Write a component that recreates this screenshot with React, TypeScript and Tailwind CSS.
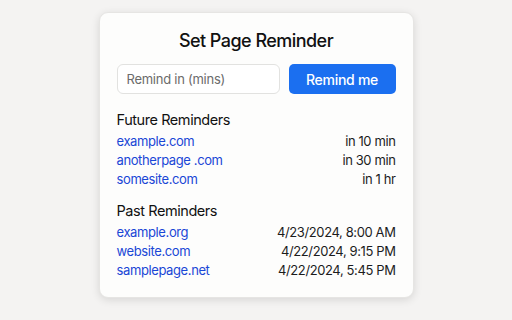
const future = [
  { site: 'example.com', when: 'in 10 min' },
  { site: 'anotherpage .com', when: 'in 30 min' },
  { site: 'somesite.com', when: 'in 1 hr' },
];

const past = [
  { site: 'example.org', when: '4/23/2024, 8:00 AM' },
  { site: 'website.com', when: '4/22/2024, 9:15 PM' },
  { site: 'samplepage.net', when: '4/22/2024, 5:45 PM' },
];

function ReminderList({ title, items }: { title: string; items: { site: string; when: string }[] }) {
  return (
    <div>
      <h2 className="text-[14.5px] leading-[20px] text-[#111] tracking-[-0.03em] mb-[2px]">{title}</h2>
      <ul>
        {items.map(item => (
          <li key={item.site} className="flex justify-between text-[13px] leading-[19px] tracking-[-0.03em]">
            <span className="text-[#1a47d6]">{item.site}</span>
            <span className="text-[#1c1c1c]">{item.when}</span>
          </li>
        ))}
      </ul>
    </div>
  );
}

export default function App() {
  return (
    <div className="w-[512px] h-[320px] bg-[#f4f3f2] pt-[12px] flex justify-center" style={{ fontFamily: 'Inter, "Noto Sans", sans-serif' }}>
      <div className="w-[315px] h-[286px] bg-[#fdfdfc] rounded-[9px] shadow-[0_2px_8px_rgba(0,0,0,0.12)] border border-[#e6e5e3] px-[17px] pt-[16px]">
        <h1 className="text-center text-[18px] leading-[24px] font-medium text-[#111] tracking-[-0.03em]">Set Page Reminder</h1>
        <div className="flex gap-[9px] mt-[11px]">
          <input
            placeholder="Remind in (mins)"
            className="w-[163px] h-[30px] rounded-[6px] border border-[#e2e2e0] bg-white px-[9px] text-[13px] tracking-[-0.02em] text-[#222] placeholder:text-[#6b6b6b] outline-none"
          />
          <button className="flex-1 h-[30px] rounded-[5px] bg-[#1b6ff0] text-white text-[14px] font-medium tracking-[-0.02em]">Remind me</button>
        </div>
        <div className="mt-[16px]">
          <ReminderList title="Future Reminders" items={future} />
        </div>
        <div className="mt-[12px]">
          <ReminderList title="Past Reminders" items={past} />
        </div>
      </div>
    </div>
  );
}
